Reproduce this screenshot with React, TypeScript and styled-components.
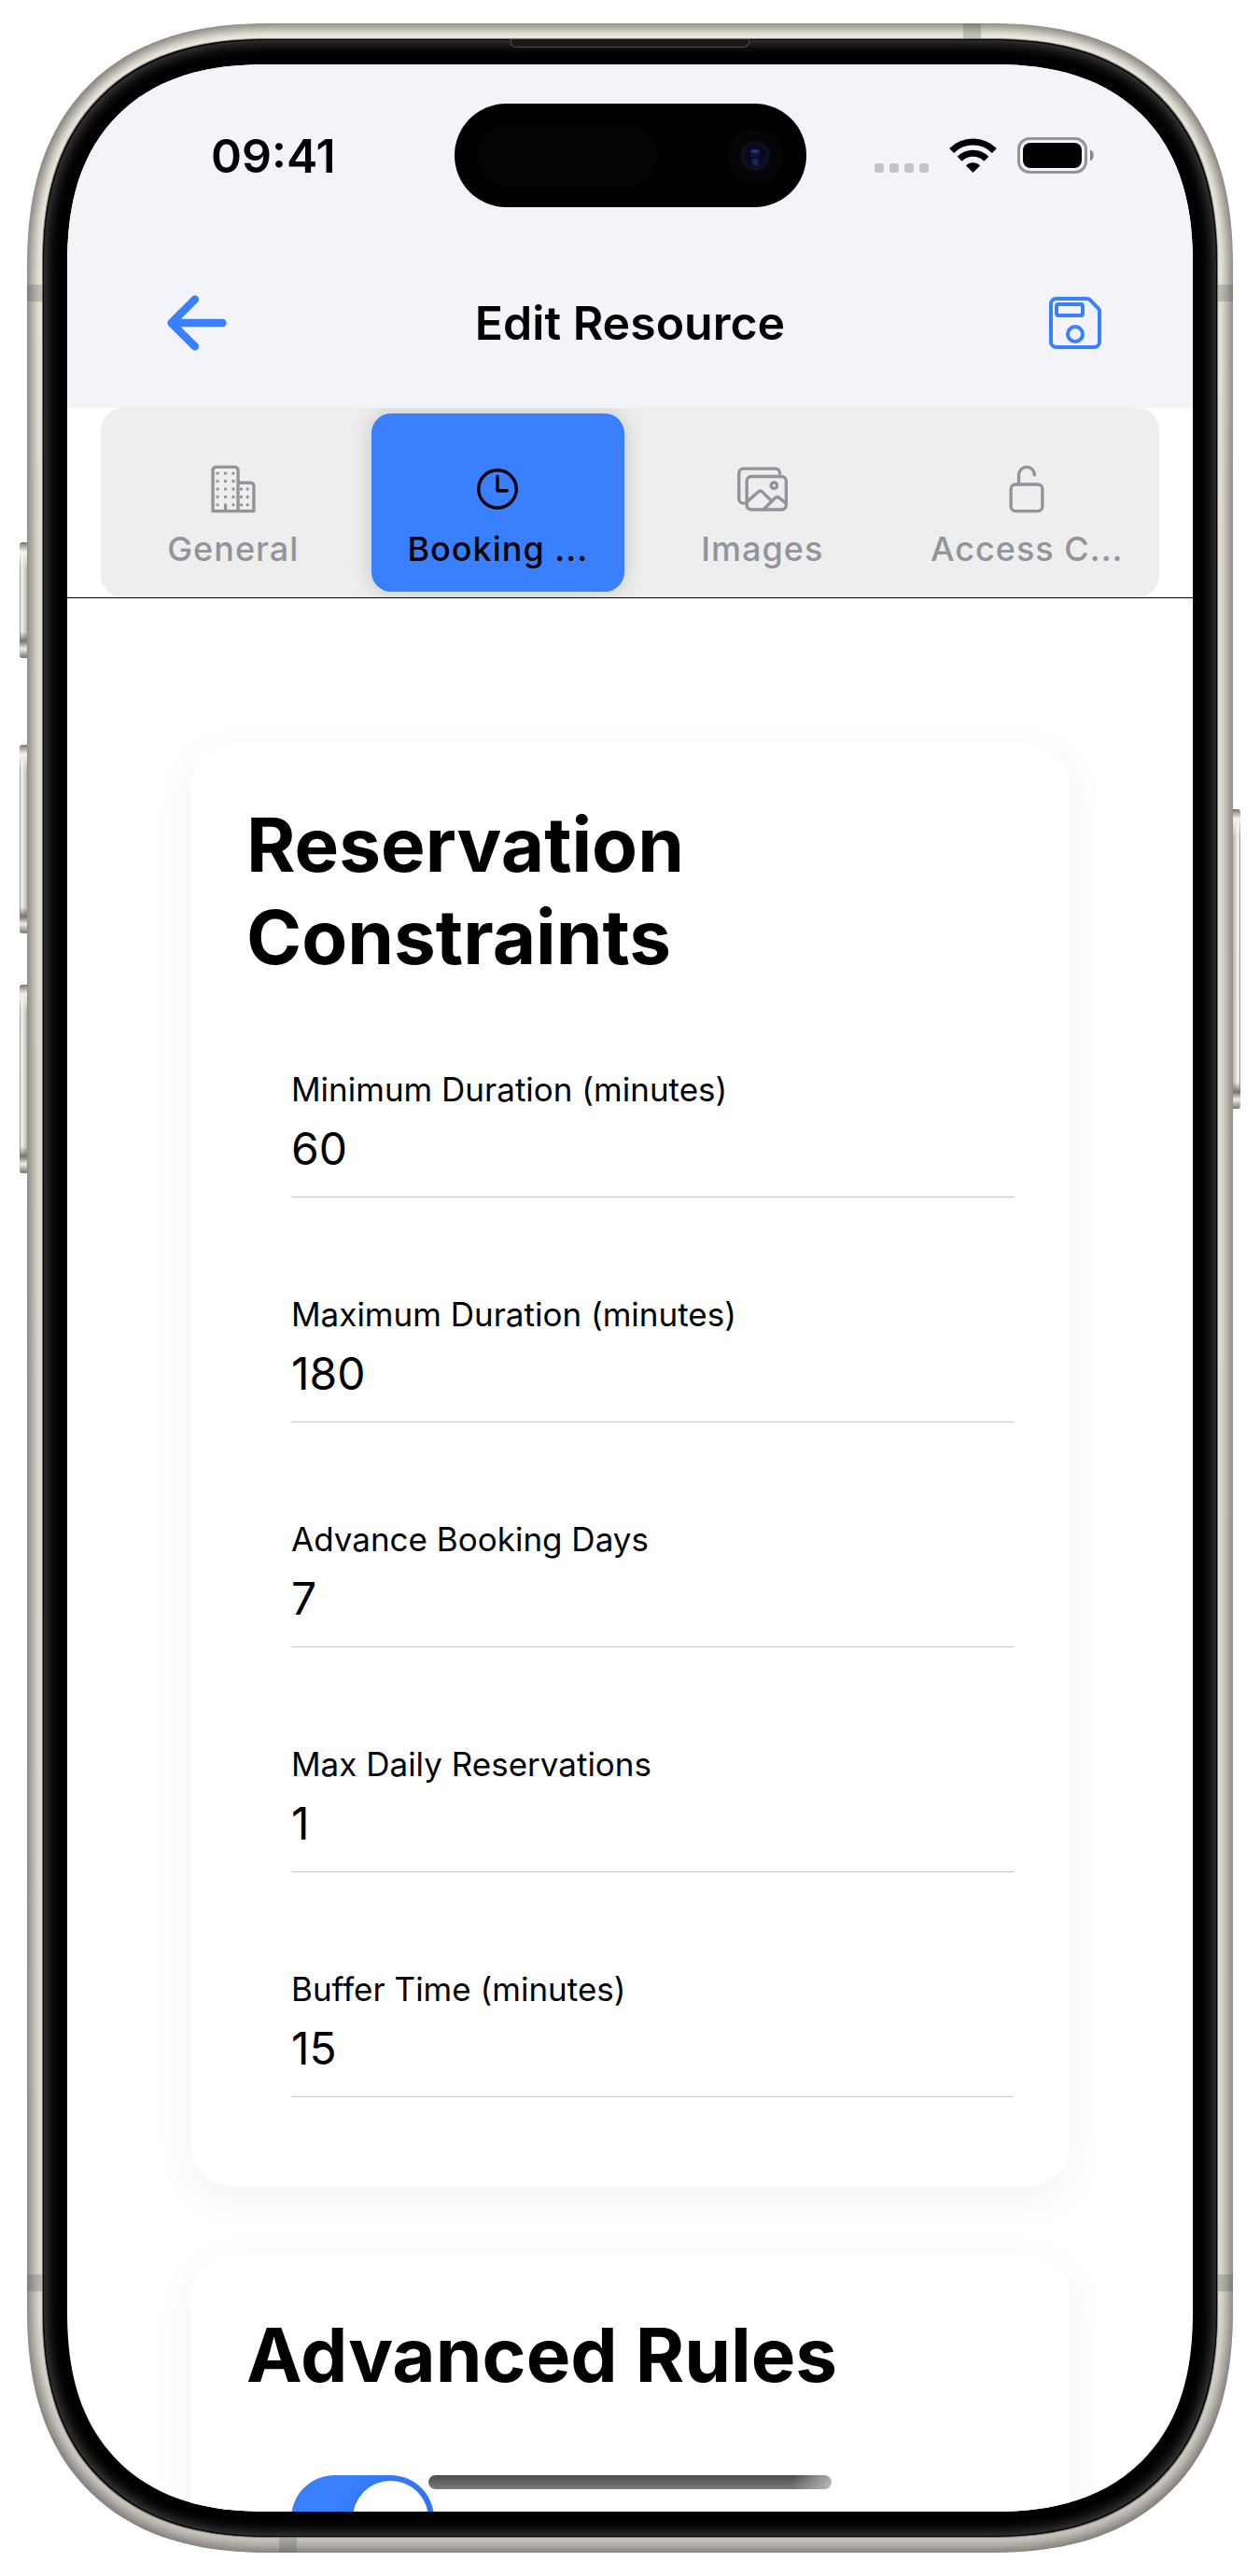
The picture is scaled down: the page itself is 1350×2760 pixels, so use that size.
import React, { useState } from 'react';
import styled, { createGlobalStyle, css } from 'styled-components';
import type { IconType } from 'react-icons';
import {
  IoArrowBack,
  IoBusinessOutline,
  IoImagesOutline,
  IoLockOpenOutline,
  IoSaveOutline,
  IoTimeOutline,
} from 'react-icons/io5';

const color = {
  primary: '#3880ff',
  medium: '#92949c',
  header: '#f3f4f9',
  segment: '#eeeeee',
  line: '#c8c7cc',
};

const GlobalStyle = createGlobalStyle`
  *, *::before, *::after { box-sizing: border-box; }
  body {
    margin: 0;
    background: #fff;
    color: #000;
    font-family: Inter, 'Liberation Sans', sans-serif;
  }
  button, input { font: inherit; color: inherit; }
`;

/* ---------- device shell ---------- */

const roundedCorners = (circle: number, smooth: number) => css`
  border-radius: ${circle}px;
  @supports (corner-shape: superellipse(1.25)) {
    border-radius: ${smooth}px;
    corner-shape: superellipse(1.25);
  }
`;

const Stage = styled.div`
  display: flex;
  height: 100vh;
  padding: 25px 29px;
`;

const Device = styled.div`
  position: relative;
  flex: 1;
  display: flex;
  min-width: 0;
  padding: 17px;
  background: linear-gradient(#f7f4ea, #ebe8de 20%, #e6e3da 90%, #cbc8c1);
  box-shadow: inset 0 0 14px 5px #76716d;
  ${roundedCorners(229, 262)}
`;

const Bezel = styled.div`
  position: relative;
  flex: 1;
  display: flex;
  min-width: 0;
  padding: 27px 26px;
  background: #000;
  box-shadow: 0 0 1px 1px #6f6b66, inset 0 0 0 1px #000, inset 0 0 14px 4px #444;
  ${roundedCorners(212, 244)}
`;

const Screen = styled.div`
  position: relative;
  flex: 1;
  display: flex;
  flex-direction: column;
  min-width: 0;
  overflow: hidden;
  background: #fff;
  ${roundedCorners(186, 215)}
`;

type Side = 'left' | 'right';

const SideKey = styled.span<{ $side: Side; $top: number; $length: number }>`
  position: absolute;
  top: ${(p) => p.$top}px;
  ${(p) => p.$side}: -8px;
  width: 8px;
  height: ${(p) => p.$length}px;
  border-radius: ${(p) => (p.$side === 'left' ? '3px 0 0 3px' : '0 3px 3px 0')};
  background:
    linear-gradient(
      #77736f 0,
      #f4f1e8 10px,
      rgba(230, 228, 220, 0) 30px,
      rgba(230, 228, 220, 0) calc(100% - 28px),
      #77736f calc(100% - 18px),
      #f0ede4 calc(100% - 10px),
      #77736f 100%
    ),
    linear-gradient(to ${(p) => p.$side}, #b9b6b0, #d8d6d0 40%, #fbf9f2 75%, #8d8983);
`;

const antennaPlace = {
  leftTop: 'left: 0; top: 280px; width: 17px; height: 18px;',
  rightTop: 'right: 0; top: 280px; width: 17px; height: 18px;',
  leftBottom: 'left: 0; bottom: 280px; width: 17px; height: 18px;',
  rightBottom: 'right: 0; bottom: 280px; width: 17px; height: 18px;',
  top: 'top: 0; right: 270px; width: 19px; height: 17px;',
  bottom: 'bottom: 0; left: 270px; width: 19px; height: 17px;',
};

type AntennaSpot = keyof typeof antennaPlace;

const Antenna = styled.span<{ $spot: AntennaSpot }>`
  position: absolute;
  background: rgba(78, 82, 78, 0.26);
  ${(p) => antennaPlace[p.$spot]}
`;

const Earpiece = styled.span`
  position: absolute;
  top: 0;
  left: 50%;
  width: 256px;
  height: 9px;
  margin-left: -128px;
  border: solid #4a4a4a;
  border-width: 0 1px 1px;
  border-radius: 0 0 6px 6px;
  background: #191919;
`;

const HomeIndicator = styled.span`
  position: absolute;
  bottom: 24px;
  left: 50%;
  width: 432px;
  height: 15px;
  margin-left: -216px;
  border-radius: 8px;
  background:
    linear-gradient(100deg, rgba(190, 190, 190, 0) 90%, rgba(190, 190, 190, 0.9)),
    linear-gradient(#4c4c4c, #7b7b7b);
`;

/* ---------- header ---------- */

const Header = styled.header`
  flex: none;
  padding-bottom: 9px;
  background: ${color.header};
`;

const StatusBar = styled.div`
  display: grid;
  grid-template-columns: 1fr auto 1fr;
  align-items: center;
  height: 195px;
`;

const Clock = styled.time`
  padding-left: 154px;
  font-size: 50px;
  font-weight: 600;
  line-height: 60px;
`;

const Island = styled.div`
  display: flex;
  align-items: center;
  justify-content: space-between;
  width: 377px;
  height: 111px;
  padding: 0 25px 0 24px;
  border-radius: 56px;
  background: #000;
`;

const Sensor = styled.span`
  width: 194px;
  height: 66px;
  border-radius: 33px;
  background: #040404;
`;

const StatusIcons = styled.div`
  display: flex;
  align-items: center;
  justify-content: flex-end;
  gap: 22px;
  padding-right: 106px;
`;

const Toolbar = styled.div`
  display: grid;
  grid-template-columns: 1fr auto 1fr;
  align-items: center;
  height: 164px;
  padding: 0 94px;
`;

const Title = styled.h1`
  margin: 0;
  font-size: 50px;
  font-weight: 600;
  line-height: 60px;
`;

const IconButton = styled.button<{ $align: 'start' | 'end' }>`
  display: flex;
  justify-self: ${(p) => p.$align};
  padding: 0;
  border: 0;
  background: none;
  color: ${color.primary};
  cursor: pointer;
`;

/* ---------- segment ---------- */

const SegmentBar = styled.div`
  flex: none;
  padding: 0 36px;
  border-bottom: 1px solid #000;
  background: #fff;
`;

const Segment = styled.div`
  display: grid;
  grid-template-columns: repeat(4, minmax(0, 1fr));
  overflow: hidden;
  border-radius: 24px;
  background: ${color.segment};
`;

const SegmentButton = styled.button<{ $active: boolean }>`
  display: flex;
  flex-direction: column;
  align-items: center;
  gap: 15px;
  margin: 6px;
  padding: 54px 0 24px;
  border: 0;
  border-radius: 21px;
  background: ${(p) => (p.$active ? color.primary : 'transparent')};
  box-shadow: ${(p) => (p.$active ? '0 0 24px rgba(0, 0, 0, 0.18)' : 'none')};
  color: ${(p) => (p.$active ? '#000' : color.medium)};
  font-size: 36px;
  font-weight: 500;
  line-height: 44px;
  letter-spacing: 1px;
  white-space: nowrap;
  cursor: pointer;
`;

/* ---------- content ---------- */

const Content = styled.main`
  flex: 1;
  display: flex;
  flex-direction: column;
  gap: 72px;
  min-height: 0;
  padding: 156px 132px 0;
  overflow: hidden;
`;

const Card = styled.section`
  flex: none;
  padding: 58px 60px;
  border-radius: 45px;
  background: #fff;
  box-shadow: 0 12px 48px rgba(0, 0, 0, 0.05);
`;

const CardTitle = styled.h2`
  margin: 0 0 80px;
  font-size: 80px;
  font-weight: 700;
  line-height: 99px;
`;

const Fields = styled.div`
  display: flex;
  flex-direction: column;
  gap: 103px;
  padding: 12px 0 38px 48px;
`;

const Field = styled.label`
  display: flex;
  flex-direction: column;
  gap: 12px;
  border-bottom: 1px solid ${color.line};
  font-size: 35px;
  line-height: 44px;
`;

const FieldInput = styled.input`
  width: 100%;
  height: 81px;
  padding: 0 0 22px;
  border: 0;
  outline: 0;
  background: transparent;
  font-size: 48px;
  line-height: 58px;
`;

const ToggleRow = styled.div`
  display: flex;
  padding-left: 48px;
`;

const Toggle = styled.input`
  appearance: none;
  width: 153px;
  height: 93px;
  margin: 0;
  padding: 6px;
  border-radius: 47px;
  background: ${color.line};
  cursor: pointer;

  &::before {
    content: '';
    display: block;
    width: 81px;
    height: 81px;
    border-radius: 50%;
    background: #fff;
    box-shadow: 0 6px 24px rgba(0, 0, 0, 0.15);
  }

  &:checked {
    background: linear-gradient(90deg, ${color.primary} 40%, #3479f2);
  }

  &:checked::before {
    margin-left: auto;
  }
`;

/* ---------- drawings ---------- */

const CameraLens = () => (
  <svg width="60" height="60" viewBox="0 0 60 60" aria-hidden="true">
    <defs>
      <radialGradient id="lens" cx="50%" cy="40%" r="60%">
        <stop offset="0" stopColor="#15174a" />
        <stop offset="0.5" stopColor="#050724" />
        <stop offset="1" stopColor="#0a0e2a" />
      </radialGradient>
    </defs>
    <circle cx="30" cy="30" r="30" fill="#050406" />
    <circle cx="30" cy="30" r="16" fill="#0e111b" />
    <circle cx="30" cy="30" r="12" fill="url(#lens)" />
    <ellipse cx="30" cy="25" rx="5" ry="2" fill="#41468a" opacity="0.6" />
    <ellipse cx="30" cy="36" rx="4" ry="3" fill="#0e4a54" opacity="0.6" />
    <ellipse cx="31" cy="40" rx="3" ry="1" fill="#5a2a8c" opacity="0.5" />
  </svg>
);

const CellularIcon = () => (
  <svg width="58" height="38" viewBox="0 0 58 38" fill="#c4c5c8" aria-hidden="true">
    {[0, 16, 32, 48].map((x) => (
      <rect key={x} x={x} y="27" width="10" height="10" rx="3" />
    ))}
  </svg>
);

const WifiIcon = () => (
  <svg width="51" height="38" viewBox="0 0 51 38" aria-hidden="true">
    <g fill="none" stroke="#000" strokeWidth="7">
      <path d="M2.6 13.4A32.4 32.4 0 0 1 48.4 13.4" />
      <path d="M11.2 22.2A20.2 20.2 0 0 1 39.8 22.2" />
    </g>
    <path d="M25.5 37 18 29.4C22 25.2 29 25.2 33 29.4Z" fill="#000" />
  </svg>
);

const BatteryIcon = () => (
  <svg width="82" height="39" viewBox="0 0 82 39" aria-hidden="true">
    <rect x="1.5" y="1.5" width="72" height="36" rx="11.5" fill="none" stroke="#949599" strokeWidth="3" />
    <rect x="6" y="6" width="63" height="27" rx="8" fill="#000" />
    <path d="M78 13.5C83 15 83 24 78 25.5Z" fill="#87888b" />
  </svg>
);

/* ---------- data ---------- */

const segments: { id: string; label: string; Icon: IconType }[] = [
  { id: 'general', label: 'General', Icon: IoBusinessOutline },
  { id: 'booking', label: 'Booking ...', Icon: IoTimeOutline },
  { id: 'images', label: 'Images', Icon: IoImagesOutline },
  { id: 'access', label: 'Access C...', Icon: IoLockOpenOutline },
];

const constraints = [
  { id: 'min-duration', label: 'Minimum Duration (minutes)', value: '60' },
  { id: 'max-duration', label: 'Maximum Duration (minutes)', value: '180' },
  { id: 'advance-days', label: 'Advance Booking Days', value: '7' },
  { id: 'max-daily', label: 'Max Daily Reservations', value: '1' },
  { id: 'buffer-time', label: 'Buffer Time (minutes)', value: '15' },
];

const sideKeys: { side: Side; top: number; length: number }[] = [
  { side: 'left', top: 556, length: 124 },
  { side: 'left', top: 773, length: 202 },
  { side: 'left', top: 1030, length: 202 },
  { side: 'right', top: 842, length: 321 },
];

export default function App() {
  const [segment, setSegment] = useState('booking');

  return (
    <>
      <GlobalStyle />
      <Stage>
        <Device>
          {sideKeys.map((k) => (
            <SideKey key={`${k.side}${k.top}`} $side={k.side} $top={k.top} $length={k.length} />
          ))}
          {(Object.keys(antennaPlace) as AntennaSpot[]).map((spot) => (
            <Antenna key={spot} $spot={spot} />
          ))}
          <Bezel>
            <Earpiece />
            <Screen>
              <Header>
                <StatusBar>
                  <Clock>09:41</Clock>
                  <Island>
                    <Sensor />
                    <CameraLens />
                  </Island>
                  <StatusIcons>
                    <CellularIcon />
                    <WifiIcon />
                    <BatteryIcon />
                  </StatusIcons>
                </StatusBar>
                <Toolbar>
                  <IconButton type="button" $align="start" aria-label="Back">
                    <IoArrowBack size={90} />
                  </IconButton>
                  <Title>Edit Resource</Title>
                  <IconButton type="button" $align="end" aria-label="Save">
                    <IoSaveOutline size={64} />
                  </IconButton>
                </Toolbar>
              </Header>

              <SegmentBar>
                <Segment role="tablist">
                  {segments.map(({ id, label, Icon }) => (
                    <SegmentButton
                      key={id}
                      type="button"
                      role="tab"
                      aria-selected={segment === id}
                      $active={segment === id}
                      onClick={() => setSegment(id)}
                    >
                      <Icon size={54} />
                      <span>{label}</span>
                    </SegmentButton>
                  ))}
                </Segment>
              </SegmentBar>

              <Content>
                <Card>
                  <CardTitle>Reservation Constraints</CardTitle>
                  <Fields>
                    {constraints.map(({ id, label, value }) => (
                      <Field key={id} htmlFor={id}>
                        <span>{label}</span>
                        <FieldInput id={id} inputMode="numeric" defaultValue={value} />
                      </Field>
                    ))}
                  </Fields>
                </Card>
                <Card>
                  <CardTitle id="advanced-rules">Advanced Rules</CardTitle>
                  <ToggleRow>
                    <Toggle type="checkbox" role="switch" aria-labelledby="advanced-rules" defaultChecked />
                  </ToggleRow>
                </Card>
              </Content>

              <HomeIndicator />
            </Screen>
          </Bezel>
        </Device>
      </Stage>
    </>
  );
}
